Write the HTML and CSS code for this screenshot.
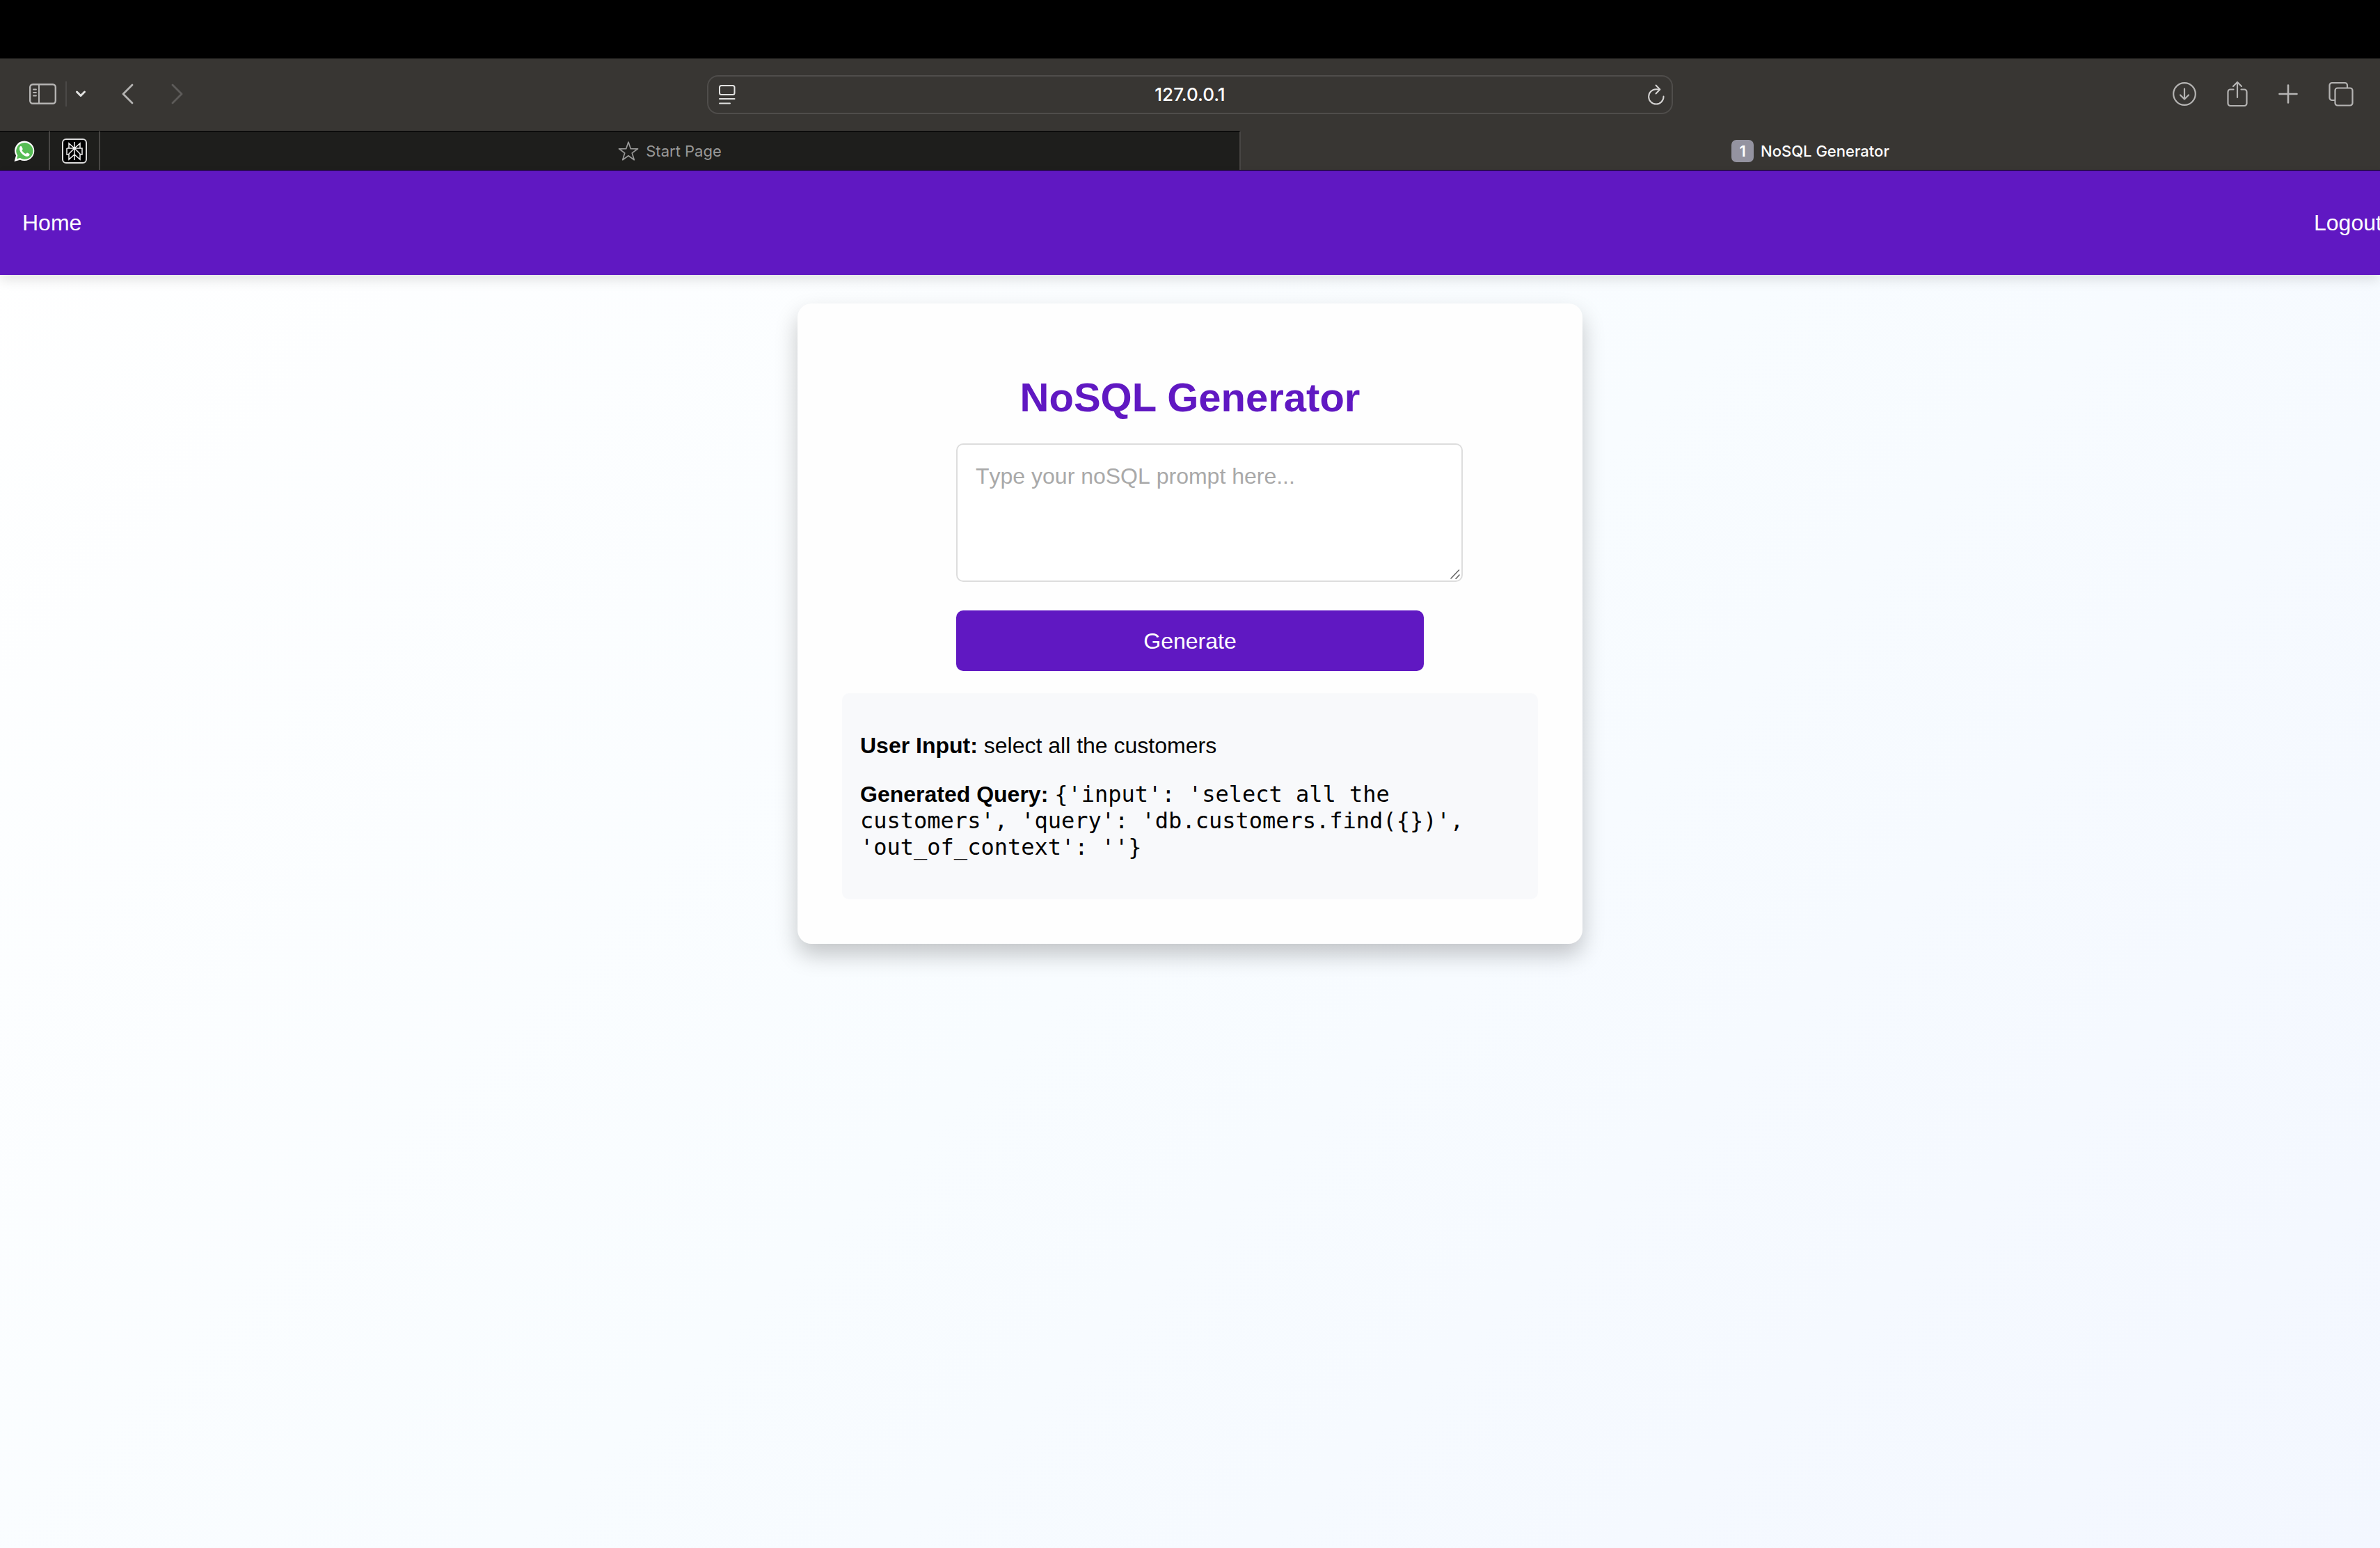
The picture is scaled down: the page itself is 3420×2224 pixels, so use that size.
FILE: index.html
```html
<!DOCTYPE html>
<html lang="en">
<head>
<meta charset="utf-8">
<title>NoSQL Generator</title>
<link rel="stylesheet" href="styles.css">
</head>
<body>
<header class="browser">
  <div class="toolbar">
    <div class="tools tools-left">
      <button class="tool sidebar" aria-label="Show sidebar">
        <svg width="40" height="32" viewBox="0 0 40 32" fill="none" stroke="#b5b4b3" stroke-linecap="round"><rect x="1.2" y="2.2" width="36.6" height="27.6" rx="4" stroke-width="2.4"/><path d="M14 2v28" stroke-width="2"/><path d="M6 9.500h4M6 14h4M6 18.500h4" stroke-width="1.800"/></svg>
      </button>
      <span class="divider"></span>
      <button class="tool chevron" aria-label="Tab groups">
        <svg width="16" height="12" viewBox="0 0 16 12" fill="none" stroke="#e2e2e1" stroke-width="3" stroke-linecap="round" stroke-linejoin="round"><path d="M2.500 3l5.500 5.500L13.500 3"/></svg>
      </button>
      <button class="tool back" aria-label="Back">
        <svg width="20" height="30" viewBox="0 0 20 30" fill="none" stroke="#b5b4b3" stroke-width="2.800" stroke-linecap="round" stroke-linejoin="round"><path d="M16 2L3 15l13 13"/></svg>
      </button>
      <button class="tool forward" aria-label="Forward">
        <svg width="20" height="30" viewBox="0 0 20 30" fill="none" stroke="#5d5b59" stroke-width="2.800" stroke-linecap="round" stroke-linejoin="round"><path d="M4 2l13 13L4 28"/></svg>
      </button>
    </div>
    <div class="address">
      <button class="tool" aria-label="Reader">
        <svg width="34" height="28" viewBox="-7 0 34 28" fill="none" stroke="#e2e2e1" stroke-width="2" stroke-linecap="round"><rect x="1" y="1" width="21.500" height="13" rx="2.500"/><path d="M1 20h21.500M1 26.500h15"/></svg>
      </button>
      <span class="url">127.0.0.1</span>
      <button class="tool" aria-label="Reload">
        <svg width="34" height="30" viewBox="-8 0 34 30" fill="none" stroke="#d5d4d3" stroke-width="2" stroke-linecap="round" stroke-linejoin="round"><path d="M22.500 17.500A10.700 10.700 0 1 1 12 7.200c2 0 3.600.2 5 .6M11.500 1.500l5.800 6-5.800 6"/></svg>
      </button>
    </div>
    <div class="tools tools-right">
      <button class="tool" aria-label="Downloads">
        <svg width="34" height="38" viewBox="1 0 34 38" fill="none" stroke="#b5b4b3" stroke-width="2.200" stroke-linecap="round" stroke-linejoin="round"><circle cx="18" cy="19" r="15.800"/><path d="M18 11.500V26M12 20.500l6 6 6-6"/></svg>
      </button>
      <button class="tool" aria-label="Share">
        <svg width="30" height="38" viewBox="0 0 30 38" fill="none" stroke="#b5b4b3" stroke-width="2.200" stroke-linecap="round" stroke-linejoin="round"><path d="M9.500 12.500H5a3.500 3.500 0 0 0-3.500 3.500v16.500A3.500 3.500 0 0 0 5 36h20a3.500 3.500 0 0 0 3.500-3.500V16a3.500 3.500 0 0 0-3.500-3.500h-4.500M15 24V2M9 8l6-6 6 6"/></svg>
      </button>
      <button class="tool" aria-label="New tab">
        <svg width="28" height="28" viewBox="0 0 28 28" fill="none" stroke="#b5b4b3" stroke-width="2.600" stroke-linecap="round"><path d="M14 1.500v25M1.500 14h25"/></svg>
      </button>
      <button class="tool" aria-label="Tab overview">
        <svg width="36" height="36" viewBox="0 0 36 36" fill="none" stroke="#b5b4b3" stroke-width="2.200" stroke-linejoin="round"><rect x="9.500" y="9.500" width="25" height="25" rx="3.500"/><path d="M9 27H5a3.500 3.500 0 0 1-3.500-3.500V5.500A3.500 3.500 0 0 1 5 2h18.500A3.500 3.500 0 0 1 27 5.500V9"/></svg>
      </button>
    </div>
  </div>
  <nav class="tabs" aria-label="Tabs">
    <a class="pinned" href="#whatsapp" aria-label="WhatsApp">
      <svg width="30" height="32" viewBox="0 0 30 32"><path d="M15.200 1.500A14 14 0 0 0 3 22.500L.5 31l8.300-2.300A14.300 14.300 0 1 0 15.200 1.500z" fill="#fff"/><path d="M15.200 4A12 12 0 0 0 5.300 22.600L4 27.300l4.900-1.300A12 12 0 1 0 15.200 4z" fill="#57bd55"/><path d="M8.300 10.500c1-1.900 2.600-1.600 3.100-.5l1.200 2.800c.3.900-.6 1.600-1.100 2.300 1.300 2.400 3 4 5.600 5 .7-.6 1.300-1.900 2.100-1.600l3 1.400c.8.500.2 2.300-.8 3.100-4.800 3.300-15.500-5.500-13.100-12.500z" fill="#fff"/></svg>
    </a>
    <a class="pinned" href="#perplexity" aria-label="Perplexity">
      <svg width="36" height="36" viewBox="0 0 36 36" fill="none" stroke="#efefef" stroke-width="1.500"><rect x="1" y="1" width="34" height="34" rx="5" fill="#000" stroke="#dcdcdc" stroke-width="2"/><path d="M18 5v26M18 14l-8-7v7M18 14l8-7v7M7 14h22v9h-3M10 23H7v-9M18 14l-8 8v8l8-7M18 14l8 8v8l-8-7"/></svg>
    </a>
    <a class="tab" href="#start">
      <svg width="30" height="30" viewBox="0 0 30 30" fill="none" stroke="#999998" stroke-width="1.700" stroke-linejoin="round"><path d="M15 2l3.300 9.700 10.200.1-8.200 6.100 3 9.800-8.300-5.900-8.300 5.900 3-9.800L1.500 11.800l10.200-.1z"/></svg>
      <span>Start Page</span>
    </a>
    <a class="tab active" href="#generator" aria-current="page">
      <span class="badge">1</span>
      <span>NoSQL Generator</span>
    </a>
  </nav>
</header>
<div class="page">
  <nav class="site-nav">
    <a href="#home">Home</a>
    <a class="logout" href="#logout">Logout</a>
  </nav>
  <main class="card">
    <h1>NoSQL Generator</h1>
    <form class="prompt-form">
      <div class="prompt">
        <textarea aria-label="Prompt" placeholder="Type your noSQL prompt here..."></textarea>
        <svg class="grip" width="14" height="14" viewBox="0 0 14 14" stroke="#666" stroke-width="1.600" stroke-linecap="round"><path d="M1 13L12.500 1M8 13.500L13 8"/></svg>
      </div>
      <button class="generate" type="button">Generate</button>
    </form>
    <section class="result">
      <p><strong>User Input:</strong> select all the customers</p>
      <p><strong>Generated Query:</strong> <code>{'input': 'select all the customers', 'query': 'db.customers.find({})', 'out_of_context': ''}</code></p>
    </section>
  </main>
</div>
</body>
</html>
```
FILE: styles.css
```css
* {
  box-sizing: border-box;
}

body {
  margin: 0;
  min-height: 100vh;
  display: flex;
  flex-direction: column;
  overflow-x: hidden;
  font-family: "Liberation Sans", Arial, sans-serif;
  font-size: 32px;
  line-height: 38px;
  color: #000;
}

a {
  color: inherit;
  text-decoration: none;
}

svg {
  display: block;
}

/* Browser window */
.browser {
  border-top: 84px solid #000;
  background: #383633;
  color: #fff;
  font-family: Inter, "Liberation Sans", sans-serif;
}

.toolbar {
  display: grid;
  grid-template-columns: 1fr minmax(0, 1388px) 1fr;
  align-items: center;
  height: 104px;
}

.tools {
  display: flex;
  align-items: center;
  padding-bottom: 2px;
}

.tools-left {
  padding-left: 42px;
}

.tools-right {
  justify-content: flex-end;
  gap: 44px;
  padding-right: 38px;
}

.tool {
  padding: 0;
  border: 0;
  background: none;
}

.divider {
  width: 2px;
  height: 36px;
  margin: 0 12px;
  background: #4b4947;
}

.back {
  margin-left: 50px;
}

.forward {
  margin-left: 50px;
}

.address {
  display: flex;
  align-items: center;
  justify-content: space-between;
  height: 56px;
  padding: 0 8px;
  border: 2px solid #4f4d4b;
  border-radius: 16px;
}

.url {
  font-size: 26px;
  font-weight: 500;
}

.tabs {
  display: flex;
  height: 57px;
  border-bottom: 1px solid #000;
  font-size: 22px;
}

.pinned,
.tab {
  display: flex;
  align-items: center;
  justify-content: center;
  border-top: 1px solid #000;
  border-right: 2px solid #484644;
  background: #1e1e1c;
}

.pinned {
  width: 72px;
}

.tab {
  box-sizing: content-box;
  flex: 1;
  gap: 10px;
  color: #999998;
}

.tab.active {
  border-top-color: #383633;
  border-right: 0;
  background: #383633;
  color: #fff;
  font-weight: 500;
}

.badge {
  width: 32px;
  border-radius: 7px;
  background: #9493a0;
  line-height: 32px;
  text-align: center;
  font-weight: 600;
}

/* Web page */
.page {
  flex: 1;
  background: linear-gradient(135deg, #ffffff, #f8fcff 50%, #f3f7ff);
}

.site-nav {
  display: flex;
  align-items: center;
  justify-content: space-between;
  height: 150px;
  padding-left: 32px;
  background: #6018c2;
  box-shadow: 0 8px 16px rgba(0, 0, 0, 0.1);
  color: #fff;
}

.logout {
  width: 95px;
  white-space: nowrap;
}

.card {
  max-width: 1128px;
  margin: 41px auto;
  padding: 64px;
  border-radius: 20px;
  background: #fefefe;
  box-shadow: 0 16px 32px rgba(0, 0, 0, 0.22);
}

h1 {
  margin: 38px 0 33px;
  color: #6018c2;
  font-size: 58px;
  line-height: 66px;
  text-align: center;
}

.prompt-form {
  max-width: 672px;
  margin: 0 auto 32px;
}

.prompt {
  position: relative;
  width: calc(100% + 56px);
  margin-bottom: 41px;
}

textarea {
  display: block;
  width: 100%;
  height: 199px;
  padding: 26px;
  border: 2px solid #ddd;
  border-radius: 10px;
  background: #fff;
  font: inherit;
  font-kerning: none;
  resize: none;
}

textarea::placeholder {
  color: #a9a9a9;
}

.grip {
  position: absolute;
  right: 4px;
  bottom: 4px;
}

.generate {
  display: block;
  width: 100%;
  height: 87px;
  border: 0;
  border-radius: 10px;
  background: #6018c2;
  color: #fff;
  font: inherit;
}

.result {
  display: flow-root;
  padding: 24px 26px;
  border-radius: 10px;
  background: #f8f9fb;
}

.result p {
  margin: 32px 0;
}

code {
  font-family: "DejaVu Sans Mono", monospace;
  font-size: 32px;
  line-height: 32px;
}
```
